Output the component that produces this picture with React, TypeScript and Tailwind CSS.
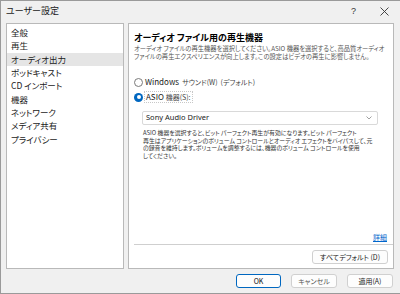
import React from "react";

const font = "font-['Noto_Sans_CJK_JP','Noto_Sans',sans-serif] [font-feature-settings:'palt']";

const items = ["全般", "再生", "オーディオ出力", "ポッドキャスト", "CD インポート", "機器", "ネットワーク", "メディア共有", "プライバシー"];

function Radio({ checked }: { checked?: boolean }) {
  return checked ? (
    <span className="w-[9px] h-[9px] rounded-full bg-[#0067c0] flex items-center justify-center shrink-0">
      <span className="w-[4px] h-[4px] rounded-full bg-white" />
    </span>
  ) : (
    <span className="w-[9px] h-[9px] rounded-full border border-[#7a7a7a] bg-white shrink-0" />
  );
}

export default function App() {
  return (
    <div className={`w-[400px] h-[294px] bg-[#f0f0f0] border-l border-t border-b border-[#9a9a9a] flex flex-col overflow-hidden text-[#1a1a1a] ${font}`}>
      {/* title bar */}
      <div className="h-[22px] flex items-start pt-[5px] pl-[5px] pr-[11px]">
        <span className="text-[9px] leading-[10px]">ユーザー設定</span>
        <span className="flex-1" />
        <span className="text-[9px] leading-[10px] text-[#333] mr-[24px] font-['Liberation_Sans',sans-serif]">?</span>
        <svg width="9" height="9" viewBox="0 0 9 9" className="mt-[1px]">
          <path d="M0.5 0.5 L8.5 8.5 M8.5 0.5 L0.5 8.5" stroke="#333" strokeWidth="0.9" />
        </svg>
      </div>
      {/* body */}
      <div className="flex gap-[4px] pl-[5px] pr-[6px] h-[246px]">
        <div className="w-[118px] shrink-0 h-full bg-white border border-[#b9b9b9] pt-[2px]">
          {items.map((t, i) => (
            <div
              key={t}
              className={`h-[13.33px] leading-[13.33px] text-[8.5px] pl-[4px] ${i === 2 ? "bg-[#e5e5e5]" : ""}`}
            >
              {t}
            </div>
          ))}
        </div>
        <div className="flex-1 min-w-0 h-full bg-white border border-[#b9b9b9] flex flex-col pl-[5px]">
          <div className="pt-[9px] text-[9px] leading-[10px] font-bold text-black whitespace-nowrap">
            オーディオ ファイル用の再生機器
          </div>
          <div className="mt-[2px] text-[6.3px] leading-[8px] text-[#555] whitespace-nowrap">
            オーディオ ファイルの再生機器を選択してください。ASIO 機器を選択すると、高品質オーディオ
            <br />
            ファイルの再生エクスペリエンスが向上します。この設定はビデオの再生に影響しません。
          </div>
          <div className="mt-[16px] h-[10px] flex items-center gap-[1px] text-[8px]">
            <Radio />
            <span className="ml-[1px]">Windows</span>
            <span className="text-[7px] text-[#444] ml-[2px]">サウンド(W)</span>
            <span className="text-[7px] text-[#444] ml-[2px]">(デフォルト)</span>
          </div>
          <div className="mt-[5px] h-[10px] flex items-center text-[8px]">
            <Radio checked />
            <span className="ml-[1px] border border-dotted border-[#c8c8c8] px-[1px] leading-[9px]">
              ASIO <span className="text-[7px] text-[#444]">機器(S):</span>
            </span>
          </div>
          <div className="mt-[9px] ml-[8px] mr-[15px] h-[14px] border border-[#d9d9d9] rounded-[2px] flex items-center pl-[3px] pr-[5px]">
            <span className="text-[7.5px] font-['Noto_Sans',sans-serif] text-[#222]">Sony Audio Driver</span>
            <span className="flex-1" />
            <svg width="6" height="4" viewBox="0 0 6 4">
              <path d="M0.5 0.5 L3 3 L5.5 0.5" stroke="#777" strokeWidth="0.7" fill="none" />
            </svg>
          </div>
          <div className="mt-[4px] ml-[9px] text-[5.9px] leading-[7.5px] text-[#333] whitespace-nowrap">
            ASIO 機器を選択すると、ビット パーフェクト再生が有効になります。ビット パーフェクト
            <br />
            再生はアプリケーションのボリューム コントロールとオーディオ エフェクトをバイパスして、元
            <br />
            の録音を維持します。ボリュームを調整するには、機器のボリューム コントロールを使用
            <br />
            してください。
          </div>
          <div className="flex-1" />
          <div className="flex justify-end pr-[6px]">
            <span className="text-[7px] leading-[8px] text-[#0066cc] underline">詳細</span>
          </div>
          <div className="mt-[3px] h-px bg-[#cfcfcf]" />
          <div className="mt-[5px] mb-[4px] flex justify-end pr-[5px]">
            <div className="w-[76px] h-[14px] bg-[#fdfdfd] border border-[#d0d0d0] rounded-[3px] flex items-center justify-center text-[7px] text-[#222]">
              すべてデフォルト (D)
            </div>
          </div>
        </div>
      </div>
      {/* footer */}
      <div className="pt-[5px] flex justify-end gap-[10px] pr-[7px]">
        <div className="w-[45px] h-[14px] bg-[#fdfdfd] border border-[#0067c0] rounded-[3px] flex items-center justify-center text-[7px] text-[#111]">
          OK
        </div>
        <div className="w-[46px] h-[14px] bg-[#fdfdfd] border border-[#d0d0d0] rounded-[3px] flex items-center justify-center text-[7px] text-[#555]">
          キャンセル
        </div>
        <div className="w-[46px] h-[14px] bg-[#fdfdfd] border border-[#d0d0d0] rounded-[3px] flex items-center justify-center text-[7px] text-[#222]">
          適用(A)
        </div>
      </div>
    </div>
  );
}
